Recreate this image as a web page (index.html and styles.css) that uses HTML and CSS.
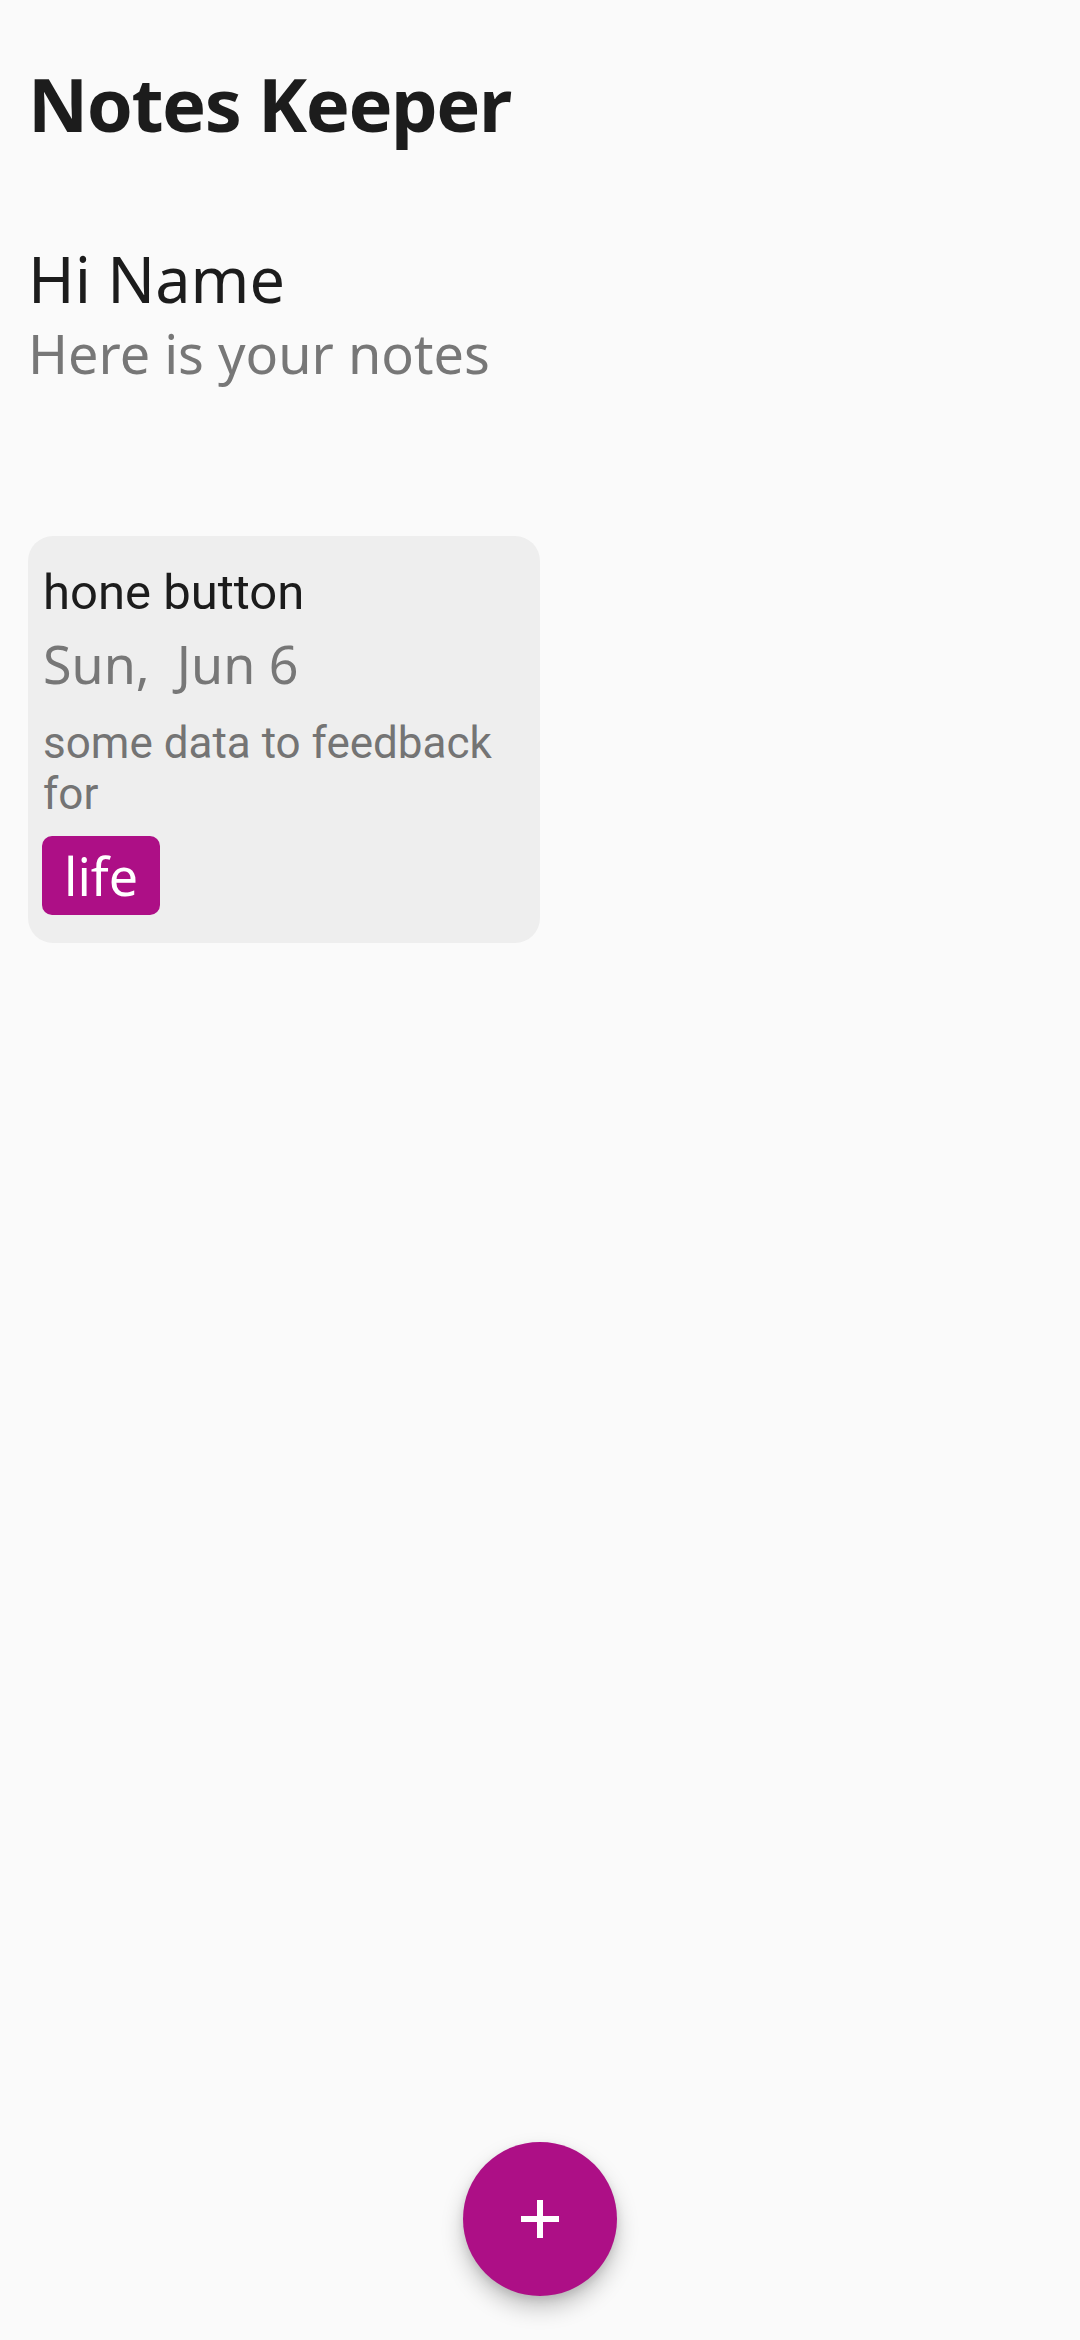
FILE: index.html
```html
<!DOCTYPE html>
<html>
<head>
<meta charset="utf-8">
<link rel="stylesheet" href="styles.css">
</head>
<body>
<div class="screen">
  <h1 class="title">Notes Keeper</h1>
  <div class="greeting">
    <div class="hi">Hi Name</div>
    <div class="sub">Here is your notes</div>
  </div>
  <div class="grid">
    <div class="card">
      <div class="card-title">hone button</div>
      <div class="card-date">Sun,&nbsp; Jun 6</div>
      <div class="card-body">some data to feedback for</div>
      <div class="tags"><span class="tag">life</span></div>
    </div>
  </div>
  <button class="fab" aria-label="Add note">
    <svg width="40" height="40" viewBox="0 0 40 40"><path d="M20 1v38M1 20h38" stroke="#fff" stroke-width="6" fill="none"/></svg>
  </button>
</div>
</body>
</html>
```

FILE: styles.css
```css
html, body {
  margin: 0;
  padding: 0;
  background: #fafafa;
}
.screen {
  position: relative;
  width: 1080px;
  height: 2340px;
  overflow: hidden;
  background: #fafafa;
  padding: 0 28px;
  box-sizing: border-box;
}
.title {
  margin: 0;
  padding-top: 54px;
  font-family: "Noto Sans", sans-serif;
  font-weight: 700;
  font-size: 74px;
  line-height: 100px;
  color: #1c1c1c;
  letter-spacing: -1.5px;
}
.greeting {
  margin-top: 87px;
  font-family: "Noto Sans", sans-serif;
}
.hi {
  font-size: 63px;
  line-height: 76px;
  color: #1c1c1c;
}
.sub {
  font-size: 54px;
  line-height: 72px;
  color: #777777;
}
.grid {
  display: grid;
  grid-template-columns: 512px 512px;
  margin-top: 147px;
}
.card {
  background: #eeeeee;
  border-radius: 25px;
  padding: 27px 15px 28px 15px;
}
.card-title {
  font-family: Roboto, sans-serif;
  font-size: 49px;
  line-height: 60px;
  color: #1c1c1c;
}
.card-date {
  font-family: "Noto Sans", sans-serif;
  font-size: 52px;
  line-height: 82px;
  color: #777777;
}
.card-body {
  margin-top: 13px;
  font-family: Roboto, sans-serif;
  font-size: 44px;
  line-height: 51px;
  color: #747474;
}
.tags {
  margin-top: 16px;
  display: flex;
}
.tag {
  display: block;
  background: #ad0f86;
  color: #ffffff;
  font-family: "Noto Sans", sans-serif;
  font-size: 52px;
  line-height: 79px;
  padding: 0 22px;
  margin-left: -1px;
  border-radius: 10px;
}
.fab {
  position: absolute;
  left: 463px;
  top: 2142px;
  width: 154px;
  height: 154px;
  border: none;
  border-radius: 50%;
  background: #ad0f86;
  box-shadow: 0 12px 22px rgba(0,0,0,0.22), 0 4px 8px rgba(0,0,0,0.10);
  display: flex;
  align-items: center;
  justify-content: center;
  padding: 0;
}
```
